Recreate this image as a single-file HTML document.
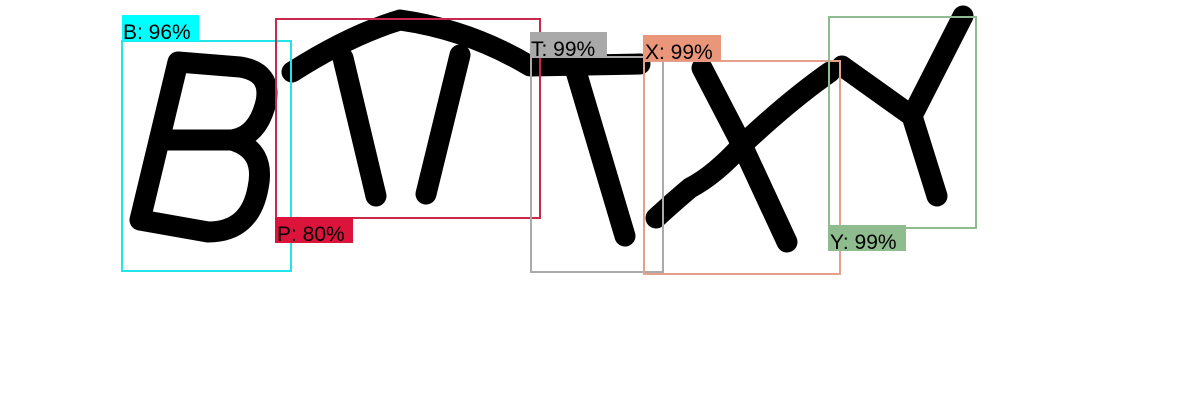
<!DOCTYPE html>
<html><head><meta charset="utf-8"><style>
html,body{margin:0;padding:0;background:#fff;width:1200px;height:420px;overflow:hidden}
svg text{font-family:"Liberation Sans",sans-serif;font-size:21px;fill:#000}
</style></head><body>
<svg width="1200" height="420" viewBox="0 0 1200 420" xmlns="http://www.w3.org/2000/svg">
<g fill="none" stroke="#000" stroke-width="21" stroke-linecap="round" stroke-linejoin="round">
<path d="M178,62 L140,220 M178,62 L240,67 Q272,72 266,102 Q258,136 232,140 L165,140 M232,140 Q266,150 258,188 Q250,232 208,232 L140,220"/>
<path d="M292,72 Q350,35 400,20 Q470,30 530,66 L640,64"/>
<path d="M343,58 L376,196"/>
<path d="M460,55 L426,194"/>
<path d="M575,68 L625,236"/>
<path d="M702,68 L742,145 L787,242"/>
<path d="M830,72 Q790,100 742,145 Q715,175 690,188 Q670,205 656,218"/>
<path d="M842,66 L912,116 L963,16 M912,116 L937,196"/>
</g>
<g fill="none" stroke-width="2">
<rect x="122" y="41" width="169" height="230" stroke="#22e5e8"/>
<rect x="276" y="19" width="264" height="199" stroke="#c9284a"/>
<rect x="531" y="57" width="132" height="215" stroke="#aaaaaa"/>
<rect x="644" y="61" width="196" height="213" stroke="#e4a08a"/>
<rect x="829" y="17" width="147" height="211" stroke="#8fbb8f"/>
</g>
<rect x="122" y="15" width="77" height="26" fill="#00ffff"/>
<text x="123" y="39">B: 96%</text>
<rect x="275" y="217" width="78" height="26" fill="#dc143c"/>
<text x="277" y="241">P: 80%</text>
<rect x="530" y="32" width="77" height="26" fill="#a9a9a9"/>
<text x="531" y="56">T: 99%</text>
<rect x="643" y="35" width="78" height="26" fill="#e9967a"/>
<text x="645" y="59">X: 99%</text>
<rect x="828" y="225" width="78" height="26" fill="#8fbc8f"/>
<text x="830" y="249">Y: 99%</text>
</svg>
</body></html>
